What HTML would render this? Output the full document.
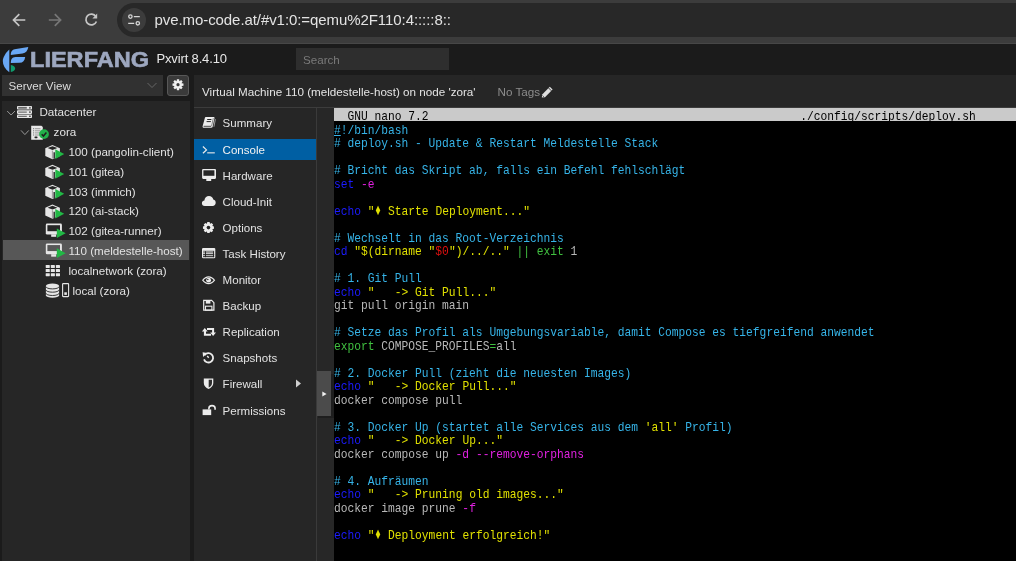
<!DOCTYPE html>
<html><head><meta charset="utf-8"><style>
*{margin:0;padding:0;box-sizing:border-box}
html,body{width:1016px;height:561px;overflow:hidden;background:#1b1b1b;font-family:"Liberation Sans",sans-serif}
.abs{position:absolute}
#root{position:absolute;left:0;top:0;width:1016px;height:561px;will-change:transform}
.t{position:absolute;white-space:nowrap}
pre{position:absolute;left:0;top:2.3px;font-family:"Liberation Mono",monospace;font-size:13px;line-height:13.5px;color:#b8b8b8;transform:scaleX(0.8660);transform-origin:0 0}
.hb{color:#000}
.cm{color:#36b4e8}
.dm{display:inline-block;transform:scale(0.82,1.22);transform-origin:50% 60%}
.kw{color:#1c1cff}
.st{color:#e0e000}
.op{color:#e020e0}
.rd{color:#e01010}
.gr{color:#40c040}
u{text-decoration-thickness:1px;text-underline-offset:1px}
</style></head><body><div id="root">
<div class="abs" style="left:0;top:0;width:1016px;height:44px;background:#3c3c3c"></div>
<div class="abs" style="left:0;top:43px;width:1016px;height:1px;background:#474747"></div>
<div class="abs" style="left:117px;top:3px;width:980px;height:34px;border-radius:17px;background:#282828"></div>
<div class="abs" style="left:122px;top:8px;width:24px;height:24px;border-radius:12px;background:#3c3c3c"></div>
<svg class="abs" style="left:0;top:0" width="160" height="44" viewBox="0 0 160 44">
<g fill="none" stroke-linecap="butt" stroke-linejoin="miter">
<path d="M25.3,20 H13.8 M19.3,14.2 L13.5,20 L19.3,25.8" stroke="#c6c6c6" stroke-width="1.7"/>
<path d="M48.8,20 H60.3 M54.8,14.2 L60.6,20 L54.8,25.8" stroke="#777" stroke-width="1.7"/>
<path d="M95.9,16.6 A5.4,5.4 0 1 0 96.4,21.5" stroke="#c6c6c6" stroke-width="1.7"/>
<path d="M97.2,13.6 V18.4 H92.4 Z" fill="#c6c6c6" stroke="none"/>
<circle cx="130.4" cy="16.6" r="1.7" stroke="#d6d6d6" stroke-width="1.3"/>
<path d="M133.8,16.6 H139.8 M128.2,23.3 H134.2" stroke="#d6d6d6" stroke-width="1.3"/>
<circle cx="137.8" cy="23.3" r="1.7" stroke="#d6d6d6" stroke-width="1.3"/>
</g></svg>
<div class="t" style="left:154.5px;top:11.70px;font-size:15px;line-height:15px;color:#e3e3e3;letter-spacing:-0.075px;">pve.mo-code.at/#v1:0:=qemu%2F110:4:::::8::</div>
<div class="abs" style="left:0;top:44px;width:1016px;height:31px;background:#1b1b1b"></div>
<svg class="abs" style="left:0;top:44px" width="30" height="30" viewBox="0 44 30 30">
<path d="M9.3,5.5 C5.0,9.5 2.8,14.0 2.8,17.0 C2.8,21.0 5.0,25.0 9.3,28.2 Z" transform="translate(0,44)" fill="#6aa8f5"/>
<path d="M10.8,54.9 C10.8,51.0 12.5,49.5 16.0,49.0 L28.3,47.1 C27.6,51.0 26.0,53.0 22.5,53.4 Z" fill="#6aa8f5"/>
<path d="M10.8,62.9 C10.8,59.5 12.0,57.3 15.5,57.0 L25.2,56.9 C24.6,60.5 23.0,62.6 19.6,62.8 Z" fill="#6aa8f5"/>
<path d="M10.8,65.1 C13.5,65.5 15.1,66.8 15.1,68.5 C15.1,70.2 13.5,71.6 10.8,72.0 Z" fill="#0f9a6c"/>
</svg>
<div class="t" style="left:29.8px;top:49.60px;font-size:21.5px;line-height:21.5px;color:#9da7bf;font-weight:bold;transform:scaleX(1.095);transform-origin:0 0;-webkit-text-stroke:0.6px #9da7bf;">LIERFANG</div>
<div class="t" style="left:156.5px;top:51.99px;font-size:13px;line-height:13px;color:#e8e8e8;letter-spacing:-0.15px;">Pxvirt 8.4.10</div>
<div class="abs" style="left:296px;top:48px;width:153px;height:22px;background:#2e2e2e"></div>
<div class="t" style="left:303px;top:53.68px;font-size:11.6px;line-height:11.6px;color:#7a7a7a;">Search</div>
<div class="abs" style="left:2px;top:75px;width:161px;height:21px;background:#313131"></div>
<div class="t" style="left:8.5px;top:80.28px;font-size:11.6px;line-height:11.6px;color:#dcdcdc;">Server View</div>
<svg class="abs" style="left:146px;top:80px" width="12" height="10"><path d="M1.5,3 L6,7.5 L10.5,3" fill="none" stroke="#666" stroke-width="1"/></svg>
<div class="abs" style="left:167px;top:75px;width:22px;height:21px;background:#3a3a3a;border:1px solid #585858;border-radius:3px"></div>
<svg class="abs" style="left:167px;top:75px" width="22" height="21"><path d="M14.65,8.33 L16.49,8.60 L16.49,10.80 L14.65,11.07 L14.55,11.31 L15.66,12.80 L14.10,14.36 L12.61,13.25 L12.37,13.35 L12.10,15.19 L9.90,15.19 L9.63,13.35 L9.39,13.25 L7.90,14.36 L6.34,12.80 L7.45,11.31 L7.35,11.07 L5.51,10.80 L5.51,8.60 L7.35,8.33 L7.45,8.09 L6.34,6.60 L7.90,5.04 L9.39,6.15 L9.63,6.05 L9.90,4.21 L12.10,4.21 L12.37,6.05 L12.61,6.15 L14.10,5.04 L15.66,6.60 L14.55,8.09 Z" fill="#f0f0f0"/><circle cx="11" cy="9.7" r="1.6" fill="#3a3a3a"/></svg>
<div class="abs" style="left:2px;top:101px;width:188px;height:460px;background:#262626"></div>
<div class="abs" style="left:3px;top:239.99px;width:186px;height:19.87px;background:#575757"></div>
<div class="t" style="left:39.4px;top:106.04px;font-size:11.65px;line-height:11.65px;color:#e2e2e2;">Datacenter</div>
<div class="t" style="left:53.6px;top:125.91px;font-size:11.65px;line-height:11.65px;color:#e2e2e2;">zora</div>
<div class="t" style="left:68.4px;top:145.78px;font-size:11.65px;line-height:11.65px;color:#e2e2e2;">100 (pangolin-client)</div>
<div class="t" style="left:68.4px;top:165.65px;font-size:11.65px;line-height:11.65px;color:#e2e2e2;">101 (gitea)</div>
<div class="t" style="left:68.4px;top:185.52px;font-size:11.65px;line-height:11.65px;color:#e2e2e2;">103 (immich)</div>
<div class="t" style="left:68.4px;top:205.39px;font-size:11.65px;line-height:11.65px;color:#e2e2e2;">120 (ai-stack)</div>
<div class="t" style="left:68.4px;top:225.26px;font-size:11.65px;line-height:11.65px;color:#e2e2e2;">102 (gitea-runner)</div>
<div class="t" style="left:68.4px;top:245.13px;font-size:11.65px;line-height:11.65px;color:#e2e2e2;">110 (meldestelle-host)</div>
<div class="t" style="left:68.4px;top:265.00px;font-size:11.65px;line-height:11.65px;color:#e2e2e2;">localnetwork (zora)</div>
<div class="t" style="left:72.4px;top:284.87px;font-size:11.65px;line-height:11.65px;color:#e2e2e2;">local (zora)</div>
<svg class="abs" style="left:0;top:0" width="190" height="300" viewBox="0 0 190 300"><path d="M7.2,111 L11.1,115 L15,111" fill="none" stroke="#999" stroke-width="1"/><path d="M21,130.4 L24.9,134.6 L28.8,130.4" fill="none" stroke="#999" stroke-width="1"/><rect x="17.0" y="106.0" width="15.0" height="3.6" rx="0.8" fill="#e6e6e6"/><rect x="18.2" y="106.9" width="8.6" height="1.8" fill="#6a6a6a"/><rect x="29.0" y="106.9" width="1.8" height="1.8" fill="#6a6a6a"/><rect x="17.0" y="110.3" width="15.0" height="3.6" rx="0.8" fill="#e6e6e6"/><rect x="18.2" y="111.6" width="8.6" height="1.0" fill="#555"/><rect x="29.0" y="111.39999999999999" width="1.8" height="1.4" fill="#555"/><rect x="17.0" y="114.5" width="15.0" height="3.6" rx="0.8" fill="#e6e6e6"/><rect x="18.2" y="115.8" width="8.6" height="1.0" fill="#555"/><rect x="29.0" y="115.6" width="1.8" height="1.4" fill="#555"/><path d="M31.2,125.7 H41.4 L42.8,127.1 V139.7 H31.2 Z" fill="#e8e8e8"/><rect x="33" y="128.2" width="1.2" height="1" fill="#777"/><rect x="35" y="128.2" width="5.5" height="1" fill="#999"/><rect x="33" y="130.3" width="1.2" height="1" fill="#777"/><rect x="35" y="130.3" width="5.5" height="1" fill="#999"/><rect x="33" y="132.4" width="1.2" height="1" fill="#777"/><rect x="35" y="132.4" width="5.5" height="1" fill="#999"/><rect x="33" y="134.5" width="1.2" height="1" fill="#777"/><rect x="35" y="134.5" width="5.5" height="1" fill="#999"/><rect x="34.5" y="136.6" width="3" height="1.6" rx="0.6" fill="#222"/><circle cx="44" cy="134.1" r="4.9" fill="#22b04a"/><path d="M41.7,134.2 L43.4,136 L46.4,132.4" fill="none" stroke="#1e1e1e" stroke-width="1.5"/><path d="M45.3,148.2 L52.4,145.0 L59.9,148.2 L59.9,156.0 L52.4,159.2 L45.3,156.0 Z" fill="#e6e6e6"/><path d="M47.6,148.1 L52.5,146.2 L57.4,148.1 L52.5,150.0 Z" fill="#262626"/><path d="M52.4,150.6 V158.6" stroke="#888" stroke-width="0.8"/><path d="M54.2,152.2 V158.4" stroke="#262626" stroke-width="1.4"/><path d="M55.3,149.3 L64.2,154.10000000000002 L55.3,158.9 Z" fill="#21b845"/><path d="M45.3,168.07 L52.4,164.87 L59.9,168.07 L59.9,175.87 L52.4,179.07 L45.3,175.87 Z" fill="#e6e6e6"/><path d="M47.6,167.97 L52.5,166.07 L57.4,167.97 L52.5,169.87 Z" fill="#262626"/><path d="M52.4,170.47 V178.47" stroke="#888" stroke-width="0.8"/><path d="M54.2,172.07 V178.27" stroke="#262626" stroke-width="1.4"/><path d="M55.3,169.17000000000002 L64.2,173.97000000000003 L55.3,178.77 Z" fill="#21b845"/><path d="M45.3,187.94 L52.4,184.74 L59.9,187.94 L59.9,195.74 L52.4,198.94 L45.3,195.74 Z" fill="#e6e6e6"/><path d="M47.6,187.84 L52.5,185.94 L57.4,187.84 L52.5,189.74 Z" fill="#262626"/><path d="M52.4,190.34 V198.34" stroke="#888" stroke-width="0.8"/><path d="M54.2,191.94 V198.14000000000001" stroke="#262626" stroke-width="1.4"/><path d="M55.3,189.04000000000002 L64.2,193.84000000000003 L55.3,198.64000000000001 Z" fill="#21b845"/><path d="M45.3,207.81 L52.4,204.61 L59.9,207.81 L59.9,215.61 L52.4,218.81 L45.3,215.61 Z" fill="#e6e6e6"/><path d="M47.6,207.71 L52.5,205.81 L57.4,207.71 L52.5,209.61 Z" fill="#262626"/><path d="M52.4,210.21 V218.21" stroke="#888" stroke-width="0.8"/><path d="M54.2,211.81 V218.01000000000002" stroke="#262626" stroke-width="1.4"/><path d="M55.3,208.91000000000003 L64.2,213.71000000000004 L55.3,218.51000000000002 Z" fill="#21b845"/><rect x="45.8" y="223.6" width="16.1" height="10.9" rx="1.3" fill="#e6e6e6"/><rect x="47.4" y="225.2" width="12.6" height="6.0" fill="#262626"/><rect x="51.2" y="234.3" width="5.0" height="2.5" fill="#e6e6e6"/><path d="M56.8,228.5 L65.7,233.3 L56.8,238.1 Z" fill="#21b845"/><rect x="45.8" y="243.47" width="16.1" height="10.9" rx="1.3" fill="#e6e6e6"/><rect x="47.4" y="245.07" width="12.6" height="6.0" fill="#575757"/><rect x="51.2" y="254.17000000000002" width="5.0" height="2.5" fill="#e6e6e6"/><path d="M56.8,248.37 L65.7,253.17000000000002 L56.8,257.97 Z" fill="#21b845"/><rect x="45.70" y="265.00" width="4.1" height="3.0" rx="0.4" fill="#e6e6e6"/><rect x="50.80" y="265.00" width="4.1" height="3.0" rx="0.4" fill="#e6e6e6"/><rect x="55.90" y="265.00" width="4.1" height="3.0" rx="0.4" fill="#e6e6e6"/><rect x="45.70" y="269.10" width="4.1" height="3.0" rx="0.4" fill="#e6e6e6"/><rect x="50.80" y="269.10" width="4.1" height="3.0" rx="0.4" fill="#e6e6e6"/><rect x="55.90" y="269.10" width="4.1" height="3.0" rx="0.4" fill="#e6e6e6"/><rect x="45.70" y="273.20" width="4.1" height="3.0" rx="0.4" fill="#e6e6e6"/><rect x="50.80" y="273.20" width="4.1" height="3.0" rx="0.4" fill="#e6e6e6"/><rect x="55.90" y="273.20" width="4.1" height="3.0" rx="0.4" fill="#e6e6e6"/><path d="M45.9,286.0 A6.6,2.4 0 0 1 59.1,286.0 V295.3 A6.6,2.4 0 0 1 45.9,295.3 Z" fill="#e6e6e6"/><path d="M45.9,286.6 A6.6,2.3 0 0 0 59.1,286.6" fill="none" stroke="#262626" stroke-width="0.9"/><path d="M45.9,289.9 A6.6,2.3 0 0 0 59.1,289.9" fill="none" stroke="#262626" stroke-width="0.9"/><path d="M45.9,293.2 A6.6,2.3 0 0 0 59.1,293.2" fill="none" stroke="#262626" stroke-width="0.9"/><rect x="62.6" y="283.6" width="6.0" height="13.0" rx="0.6" fill="none" stroke="#e6e6e6" stroke-width="1.1"/><rect x="64.3" y="292.3" width="2.6" height="2.6" fill="#e6e6e6"/></svg>
<div class="abs" style="left:194px;top:75px;width:822px;height:486px;background:#262626"></div>
<div class="t" style="left:202.0px;top:86.13px;font-size:11.66px;line-height:11.66px;color:#e4e4e4;">Virtual Machine 110 (meldestelle-host) on node 'zora'</div>
<div class="t" style="left:497.6px;top:86.13px;font-size:11.66px;line-height:11.66px;color:#8c8c8c;">No Tags</div>
<svg class="abs" style="left:540px;top:85px" width="14" height="14" viewBox="0 0 14 14"><path d="M2.2,9.4 L9.8,1.8 L12.6,4.6 L5.0,12.2 L1.8,12.4 Z" fill="#dedede"/><path d="M8.6,3.0 L11.4,5.8" stroke="#262626" stroke-width="0.9"/><path d="M2.5,10.5 L3.9,11.9" stroke="#262626" stroke-width="0.7"/></svg>
<div class="abs" style="left:194px;top:106.5px;width:822px;height:1px;background:#3c3c3c"></div>
<div class="abs" style="left:194px;top:139px;width:122.2px;height:21px;background:#005fa3"></div>
<div class="t" style="left:222.6px;top:117.52px;font-size:11.55px;line-height:11.55px;color:#e2e2e2;">Summary</div>
<div class="t" style="left:222.6px;top:144.82px;font-size:11.55px;line-height:11.55px;color:#f2f2f2;">Console</div>
<div class="t" style="left:222.6px;top:170.82px;font-size:11.55px;line-height:11.55px;color:#e2e2e2;">Hardware</div>
<div class="t" style="left:222.6px;top:197.02px;font-size:11.55px;line-height:11.55px;color:#e2e2e2;">Cloud-Init</div>
<div class="t" style="left:222.6px;top:223.02px;font-size:11.55px;line-height:11.55px;color:#e2e2e2;">Options</div>
<div class="t" style="left:222.6px;top:248.82px;font-size:11.55px;line-height:11.55px;color:#e2e2e2;">Task History</div>
<div class="t" style="left:222.6px;top:274.82px;font-size:11.55px;line-height:11.55px;color:#e2e2e2;">Monitor</div>
<div class="t" style="left:222.6px;top:300.52px;font-size:11.55px;line-height:11.55px;color:#e2e2e2;">Backup</div>
<div class="t" style="left:222.6px;top:326.62px;font-size:11.55px;line-height:11.55px;color:#e2e2e2;">Replication</div>
<div class="t" style="left:222.6px;top:352.82px;font-size:11.55px;line-height:11.55px;color:#e2e2e2;">Snapshots</div>
<div class="t" style="left:222.6px;top:378.82px;font-size:11.55px;line-height:11.55px;color:#e2e2e2;">Firewall</div>
<div class="t" style="left:222.6px;top:405.62px;font-size:11.55px;line-height:11.55px;color:#e2e2e2;">Permissions</div>
<svg class="abs" style="left:0;top:0" width="320" height="430" viewBox="0 0 320 430"><path d="M205.7,117.0 H213.9 C214.4,117.0 214.6,117.4 214.5,117.9 L212.7,126.6 C212.5,127.4 212.1,127.8 211.3,127.8 H203.8 C202.8,127.8 202.4,127.0 202.6,126.2 L205.0,117.6 C205.1,117.2 205.4,117.0 205.7,117.0 Z" fill="#ececec"/><path d="M203.6,126.3 H211.2" stroke="#3a3a3a" stroke-width="0.9"/><path d="M207.2,119.5 H211.4 M206.6,121.6 H210.9" stroke="#262626" stroke-width="1.0"/><path d="M213.3,118.2 L211.6,126.0" stroke="#444" stroke-width="0.6"/><path d="M215.4,119.2 L213.9,126.8" stroke="#cfcfcf" stroke-width="0.7"/><path d="M202.9,146.5 L206.5,149.9 L202.9,153.3" fill="none" stroke="#ececec" stroke-width="1.2"/><rect x="207.2" y="152.3" width="7.6" height="1.1" fill="#ececec"/><rect x="202.1" y="168.9" width="13.9" height="10.0" rx="1.1" fill="#ececec"/><rect x="203.4" y="170.3" width="11.0" height="5.5" fill="#262626"/><rect x="206.3" y="178.8" width="4.9" height="2.2" fill="#ececec"/><path d="M204.8,206 C202.8,206 201.9,204.6 201.9,203.2 C201.9,201.6 203.2,200.6 204.4,200.6 C204.5,198.0 206.5,196 209.0,196 C211.2,196 212.8,197.4 213.3,199.6 C214.8,199.9 215.7,201.2 215.7,202.8 C215.7,204.6 214.4,206 212.6,206 Z" fill="#ececec"/><path d="M212.35,226.04 L213.93,226.44 L213.93,228.76 L212.35,229.16 L212.31,229.26 L213.15,230.65 L211.50,232.30 L210.11,231.46 L210.01,231.50 L209.61,233.08 L207.29,233.08 L206.89,231.50 L206.79,231.46 L205.40,232.30 L203.75,230.65 L204.59,229.26 L204.55,229.16 L202.97,228.76 L202.97,226.44 L204.55,226.04 L204.59,225.94 L203.75,224.55 L205.40,222.90 L206.79,223.74 L206.89,223.70 L207.29,222.12 L209.61,222.12 L210.01,223.70 L210.11,223.74 L211.50,222.90 L213.15,224.55 L212.31,225.94 Z" fill="#ececec"/><circle cx="208.45" cy="227.6" r="1.8" fill="#262626"/><rect x="202.0" y="247.9" width="13.3" height="10.4" rx="1.2" fill="#ececec"/><rect x="203.1" y="250.6" width="11.1" height="6.6" fill="#8e8e8e"/><rect x="203.1" y="253.2" width="11.1" height="1.0" fill="#cfcfcf"/><rect x="203.1" y="255.2" width="11.1" height="1.0" fill="#cfcfcf"/><rect x="203.1" y="254.2" width="11.1" height="0.9" fill="#2a2a2a"/><rect x="203.1" y="256.2" width="11.1" height="0.9" fill="#2a2a2a"/><rect x="205.1" y="251.2" width="0.9" height="6.0" fill="#222"/><rect x="213.1" y="251.2" width="0.9" height="6.0" fill="#222"/><path d="M202.0,280.3 C204.0,277.4 206.3,276.3 208.6,276.3 C210.9,276.3 213.2,277.4 215.2,280.3 C213.2,283.1 210.9,284.2 208.6,284.2 C206.3,284.2 204.0,283.1 202.0,280.3 Z" fill="#ececec"/><path d="M203.5,280.3 C205.1,278.4 206.8,277.6 208.6,277.6 C210.4,277.6 212.1,278.4 213.7,280.3 C212.1,282.1 210.4,282.9 208.6,282.9 C206.8,282.9 205.1,282.1 203.5,280.3 Z" fill="#262626"/><circle cx="208.6" cy="280.2" r="2.4" fill="#ececec"/><circle cx="207.8" cy="279.5" r="0.8" fill="#3a3a3a"/><path d="M203.7,300.4 H211.6 L213.9,302.7 V310.2 H203.7 Z" fill="none" stroke="#ececec" stroke-width="1.2"/><rect x="205.8" y="300.4" width="4.6" height="3.2" fill="#ececec"/><rect x="205.5" y="306.2" width="6.4" height="4.0" fill="none" stroke="#ececec" stroke-width="1.1"/><path d="M201.9,331.5 L204.8,328.0 L207.7,331.5 H206.0 V333.8 H211.0 V335.8 H203.9 V331.5 Z" fill="#ececec"/><path d="M216.0,332.5 L213.1,335.9 L210.2,332.5 H212.1 V330.0 H207.0 V328.0 H214.1 V332.5 Z" fill="#ececec"/><path d="M204.5,355.2 A4.7,4.7 0 1 1 204.0,359.4" fill="none" stroke="#ececec" stroke-width="1.8"/><path d="M202.6,352.2 L207.2,352.9 L203.1,356.9 Z" fill="#ececec"/><path d="M208.7,357.7 L207.2,356.0" fill="none" stroke="#ececec" stroke-width="1.3"/><path d="M203.8,378.5 H213.3 V382.9 C213.3,385.8 211.3,387.6 208.55,388.9 C205.8,387.6 203.8,385.8 203.8,382.9 Z" fill="#ececec"/><path d="M208.7,379.8 H212.0 V382.9 C212.0,385.0 210.7,386.4 208.7,387.4 Z" fill="#2e2e2e"/><path d="M296,379.4 L301,383.4 L296,387.4 Z" fill="#cfcfcf"/><rect x="202.6" y="409.4" width="8.6" height="5.7" fill="#ececec"/><path d="M208.9,409.6 V408.4 C208.9,406.6 210.3,405.6 212.0,405.6 C213.7,405.6 215.1,406.6 215.1,408.4 V409.8" fill="none" stroke="#ececec" stroke-width="1.6"/></svg>
<div class="abs" style="left:316.2px;top:107.5px;width:1px;height:454px;background:#3a3a3a"></div>
<div class="abs" style="left:317.2px;top:107.5px;width:17px;height:454px;background:#272727"></div>
<div class="abs" style="left:331px;top:373.5px;width:3px;height:44.5px;background:#1e1e1e"></div><div class="abs" style="left:318px;top:416px;width:16px;height:2px;background:#1e1e1e"></div>
<div class="abs" style="left:317px;top:371.4px;width:14px;height:44.6px;background:#4b4b4b"></div>
<svg class="abs" style="left:317px;top:371px" width="14" height="45"><path d="M5.3,20.6 L9.6,23.0 L5.3,25.4 Z" fill="#f0f0f0"/></svg>
<div class="abs" style="left:334px;top:108px;width:682px;height:453px;background:#000;overflow:hidden"><div style="position:absolute;left:0;top:0.2px;width:682px;height:13.2px;background:#cacaca"></div><pre><span class="hb">  GNU nano 7.2                                                       ./config/scripts/deploy.sh</span>
<span class="cm"><u>#</u>!/bin/bash</span>
<span class="cm"># deploy.sh - Update &amp; Restart Meldestelle Stack</span>

<span class="cm"># Bricht das Skript ab, falls ein Befehl fehlschlägt</span>
<span class="kw">set</span> <span class="op">-e</span>

<span class="kw">echo</span> <span class="st">"<span class="dm">♦</span> Starte Deployment..."</span>

<span class="cm"># Wechselt in das Root-Verzeichnis</span>
<span class="kw">cd</span> <span class="st">"$(dirname "</span><span class="rd">$0</span><span class="st">")/../.."</span> <span class="gr">|| exit</span> 1

<span class="cm"># 1. Git Pull</span>
<span class="kw">echo</span> <span class="st">"   -&gt; Git Pull..."</span>
git pull origin main

<span class="cm"># Setze das Profil als Umgebungsvariable, damit Compose es tiefgreifend anwendet</span>
<span class="gr">export</span> COMPOSE_PROFILES<span class="gr">=</span>all

<span class="cm"># 2. Docker Pull (zieht die neuesten Images)</span>
<span class="kw">echo</span> <span class="st">"   -&gt; Docker Pull..."</span>
docker compose pull

<span class="cm"># 3. Docker Up (startet alle Services aus dem </span><span class="st">'all'</span><span class="cm"> Profil)</span>
<span class="kw">echo</span> <span class="st">"   -&gt; Docker Up..."</span>
docker compose up <span class="op">-d --remove-orphans</span>

<span class="cm"># 4. Aufräumen</span>
<span class="kw">echo</span> <span class="st">"   -&gt; Pruning old images..."</span>
docker image prune <span class="op">-f</span>

<span class="kw">echo</span> <span class="st">"<span class="dm">♦</span> Deployment erfolgreich!"</span></pre></div>
</div></body></html>
